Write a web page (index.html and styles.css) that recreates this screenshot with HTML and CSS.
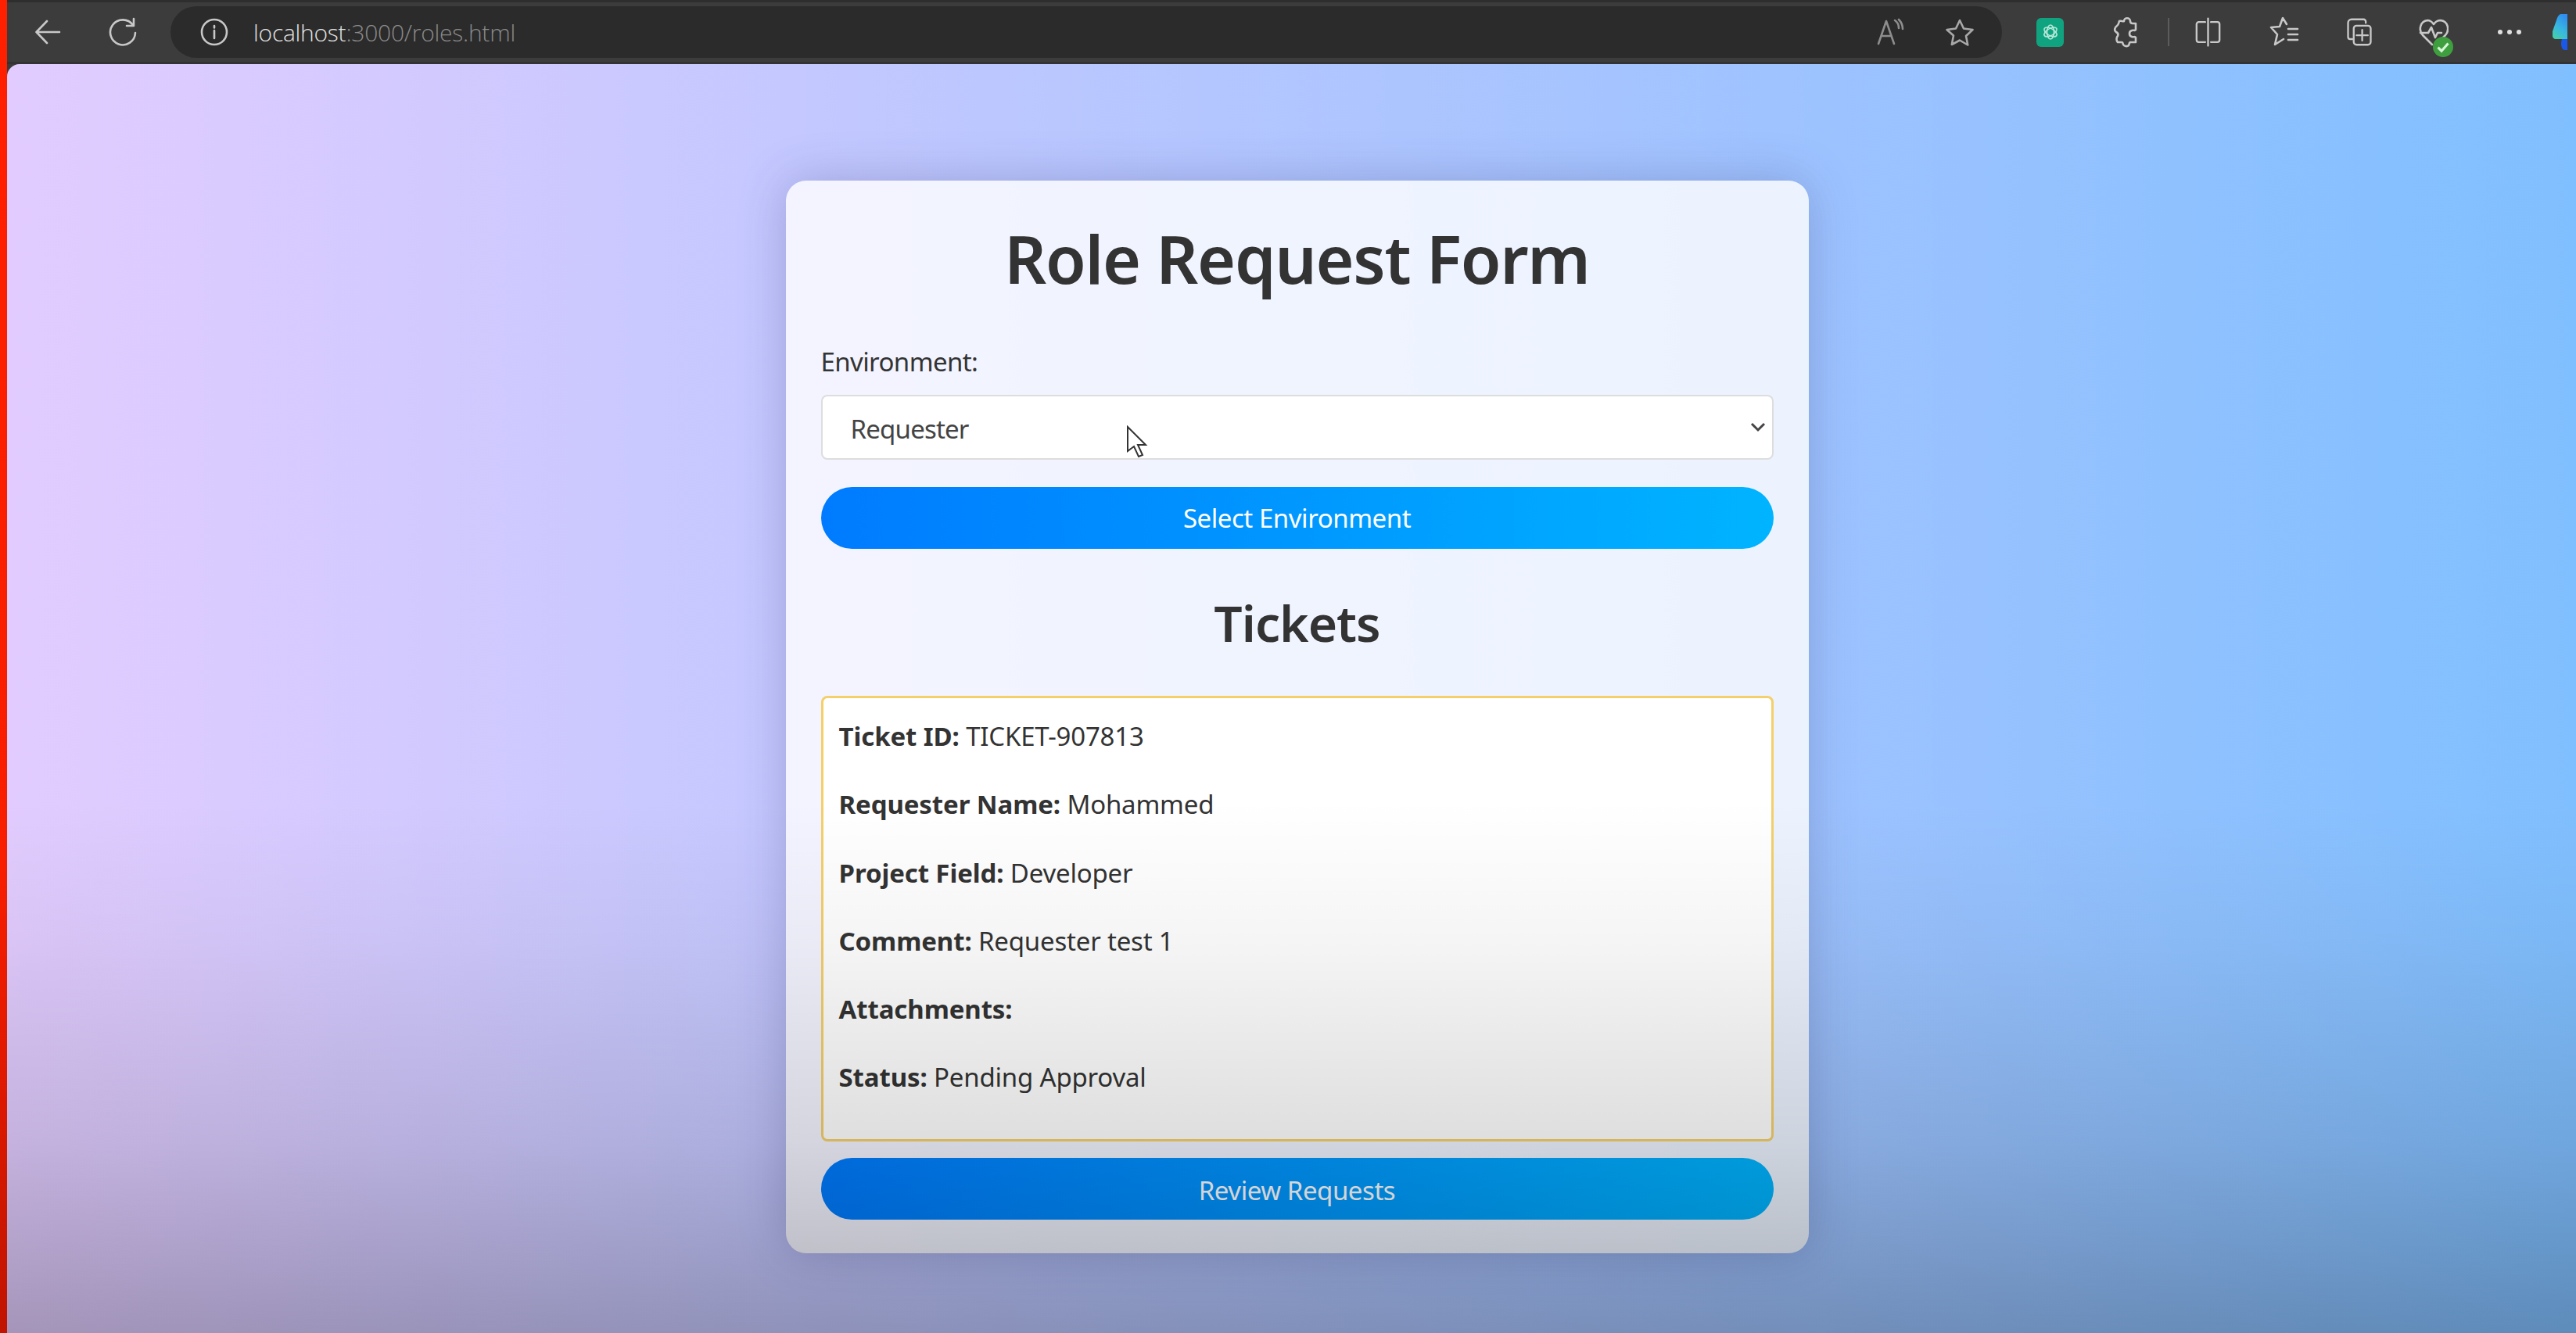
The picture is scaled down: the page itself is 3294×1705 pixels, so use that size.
FILE: index.html
```html
<!DOCTYPE html>
<html lang="en">
<head>
<meta charset="utf-8">
<title>Role Request Form</title>
<link rel="stylesheet" href="styles.css">
</head>
<body>
<div class="strip"></div>
<div class="window">
  <header class="toolbar">
    <svg class="tb-icon back" viewBox="0 0 36 36"><path d="M33 18H4M17 4 3.5 18 17 32"/></svg>
    <svg class="tb-icon reload" viewBox="0 0 38 40"><path d="M32 11A16 16 0 1 0 35 21M33 3v9h-9"/></svg>
    <div class="address">
      <svg class="tb-icon info" viewBox="0 0 36 36"><circle cx="18" cy="18" r="16"/><path d="M18 16v10M18 10v2.5"/></svg>
      <span class="url"><span class="host">localhost</span>:3000/roles.html</span>
      <span class="grow"></span>
      <svg class="tb-icon aloud" viewBox="0 0 36 36"><path d="M3 33 13 4l10 29M6.5 23h13M24 3c3 2 5 6 5 10M29 2c3 3 5 7 5 12"/></svg>
      <svg class="tb-icon star" viewBox="0 0 38 36"><path d="M19 3l5 10.5 11.5 1.5-8.5 8 2.2 11.5L19 28.500 8.800 34 11 22.500 2.500 15 14 13.500z"/></svg>
    </div>
    <div class="ext-gpt"><svg viewBox="0 0 24 24"><ellipse cx="12" cy="12" rx="4.5" ry="9"/><ellipse cx="12" cy="12" rx="4.5" ry="9" transform="rotate(60 12 12)"/><ellipse cx="12" cy="12" rx="4.5" ry="9" transform="rotate(120 12 12)"/></svg></div>
    <svg class="tb-icon puzzle" viewBox="0 0 36 40"><path d="M14 6c0-5 8-5 8 0 0 2 1 3 3 3h4v8c-1 2-3 0-5 1-4 1-4 7 0 8 2 1 4-1 5 1v6h-7c-2 1-1 3-2 4-2 2-6 1-7-1-1-2 0-3-2-3H6c-2-2-2-6 0-8 1-2 0-4-2-5-3-2-2-6 1-8 2-1 2-3 3-6 2-1 5 1 6 0z"/></svg>
    <span class="sep"></span>
    <svg class="tb-icon split" viewBox="0 0 36 40"><path d="M18 1v38M14 6H5a3 3 0 0 0-3 3v22a3 3 0 0 0 3 3h9M22 6h9a3 3 0 0 1 3 3v22a3 3 0 0 1-3 3h-9"/></svg>
    <svg class="tb-icon fav" viewBox="0 0 38 40"><path d="M22 10 17 2l-4 11-11 1 8 9-3 13 11-7M24 16h12M24 23h12M24 30h12"/></svg>
    <svg class="tb-icon coll" viewBox="0 0 38 42"><path d="M28 8V6a3 3 0 0 0-3-3H8a5 5 0 0 0-5 5v20a3 3 0 0 0 3 3h3"/><rect x="11" y="12" width="24" height="27" rx="4"/><path d="M23 18v15M15 25.5h16"/></svg>
    <div class="heart">
      <svg class="tb-icon" viewBox="0 0 38 36"><path d="M17 34 5 22C-1 15 2 4 11 3c4 0 6 2 8 5 2-3 5-5 9-5 9 1 12 12 6 19l-3 3M2 19h10l4-7 5 13 3-6h5"/></svg>
      <span class="check"><svg viewBox="0 0 20 20"><path d="M5 10.5l3.5 3.5L15 6.5"/></svg></span>
    </div>
    <div class="dots"><i></i><i></i><i></i></div>
    <svg class="copilot" viewBox="0 0 19 46">
      <defs>
        <linearGradient id="cop" x1="0.7" y1="0" x2="0.2" y2="1">
          <stop offset="0" stop-color="#2f8df0"/>
          <stop offset="0.55" stop-color="#38b8e0"/>
          <stop offset="1" stop-color="#44d0a8"/>
        </linearGradient>
      </defs>
      <path d="M11 0h8v32H4C0 32-1 27 0 22L6 5C7 2 9 0 11 0z" fill="url(#cop)"/>
      <path d="M12 32h7v14h-3C11 46 10 38 12 32z" fill="#1c58e8"/>
    </svg>
  </header>
  <main class="page">
    <section class="card">
      <h1 class="title">Role Request Form</h1>
      <label class="label" for="env">Environment:</label>
      <div class="select-wrap">
        <select class="select" id="env"><option>Requester</option></select>
        <svg class="chevron" viewBox="0 0 20 14"><path d="M2 3l8 8 8-8"/></svg>
        <svg class="cursor" viewBox="0 0 28 42"><path d="M2 2v31l8-6 6 13 5-2-6-13h10z"/></svg>
      </div>
      <button class="btn btn-select" type="button">Select Environment</button>
      <h2 class="subtitle">Tickets</h2>
      <article class="ticket">
        <p class="row"><b>Ticket ID:</b> TICKET-907813</p>
        <p class="row"><b>Requester Name:</b> Mohammed</p>
        <p class="row"><b>Project Field:</b> Developer</p>
        <p class="row"><b>Comment:</b> Requester test 1</p>
        <p class="row"><b>Attachments:</b></p>
        <p class="row"><b>Status:</b> Pending Approval</p>
      </article>
      <button class="btn btn-review" type="button">Review Requests</button>
    </section>
    <div class="fade"></div>
  </main>
</div>
</body>
</html>
```
FILE: styles.css
```css
* { box-sizing: border-box; }
html, body { margin: 0; height: 100%; overflow: hidden; }
body { display: flex; background: #3b3b3b; font-family: "Noto Sans", "Open Sans", sans-serif; color: #333; }
.strip { width: 9px; flex: none; background: linear-gradient(180deg, #ff2000 0%, #f81e00 65%, #c01400 100%); }
.window { flex: 1; display: flex; flex-direction: column; min-width: 0; }
.toolbar { height: 82px; flex: none; display: flex; align-items: center; background: #3c3c3c; border-top: 3px solid #2e2e2e; border-bottom: 3px solid #333; padding-left: 34px; }
.tb-icon { fill: none; stroke: #c8c8c8; stroke-width: 2.6; stroke-linecap: round; stroke-linejoin: round; flex: none; filter: blur(.5px); }
.back { width: 36px; height: 36px; }
.reload { width: 38px; height: 40px; margin-left: 59px; }
.address { width: 2342px; height: 66px; margin-left: 42px; background: #2b2b2b; border-radius: 33px; display: flex; align-items: center; padding-left: 38px; }
.info { width: 36px; height: 36px; }
.url { margin-left: 32px; font: 300 30px "Open Sans", sans-serif; letter-spacing: -.25px; color: #8a8a8a; }
.host { color: #e2e2e2; }
.grow { flex: 1; }
.aloud { width: 36px; height: 36px; stroke: #8d8d8d; }
.star { width: 38px; height: 36px; margin: 0 35px 0 52px; stroke: #a8a8a8; }
.ext-gpt { width: 35px; height: 37px; margin-left: 44px; border-radius: 6px; background: #10a37f; display: flex; align-items: center; justify-content: center; }
.ext-gpt svg { width: 24px; height: 24px; fill: none; stroke: #b8e8da; stroke-width: 1.6; filter: blur(.5px); }
.puzzle { width: 36px; height: 40px; margin-left: 63px; }
.sep { width: 2px; height: 36px; background: #5c5c5c; margin-left: 34px; }
.split { width: 33px; height: 38px; margin-left: 33px; }
.fav { width: 38px; height: 40px; margin-left: 62px; }
.coll { width: 36px; height: 38px; margin-left: 59px; }
.heart { position: relative; width: 38px; height: 36px; margin-left: 58px; }
.heart .tb-icon { width: 38px; height: 36px; display: block; }
.check { position: absolute; right: -6px; bottom: -14px; width: 26px; height: 26px; border-radius: 50%; background: #3f9f3f; display: flex; }
.check svg { fill: none; stroke: #d8f5d8; stroke-width: 2.4; }
.dots { display: flex; gap: 6px; margin-left: 63px; }
.dots i { width: 6px; height: 6px; border-radius: 50%; background: #e0e0e0; }
.copilot { width: 19px; height: 46px; margin-left: 40px; flex: none; }
.page { flex: 1; position: relative; display: flex; justify-content: center; align-items: flex-start; padding: 149px 0 0 14px; border-radius: 16px 0 0 0; background: linear-gradient(90deg, #e2ccff 0%, #80bfff 100%); overflow: hidden; }
.fade { position: absolute; inset: 0; pointer-events: none; background: linear-gradient(180deg, rgba(0,0,0,0) 0%, rgba(0,0,0,0) 58%, rgba(0,0,0,.04) 69%, rgba(0,0,0,.13) 85%, rgba(0,0,0,.27) 100%); }
.card { width: 1308px; height: 1372px; padding: 45px 45px 0; border-radius: 26px; background: rgba(255,255,255,.8); box-shadow: 0 0 60px rgba(60,60,120,.28); flex: none; display: flex; flex-direction: column; }
.title { margin: -2px 0 0; text-align: center; font-size: 84px; line-height: 114px; font-weight: 600; color: #333; letter-spacing: -1.3px; }
.label { margin-top: 52px; font-size: 33px; line-height: 46px; letter-spacing: -.6px; color: #333; }
.select-wrap { position: relative; margin-top: 19px; }
.select { appearance: none; width: 100%; height: 83px; padding: 3px 36px 0; border: 2px solid #ddd; border-radius: 8px; background: #fff; font: 33px "Noto Sans", sans-serif; letter-spacing: -.8px; color: #444; display: block; }
.chevron { position: absolute; right: 10px; top: 34px; width: 20px; height: 14px; fill: none; stroke: #444; stroke-width: 3; }
.cursor { position: absolute; left: 390px; top: 39px; width: 28px; height: 42px; fill: #fff; stroke: #333; stroke-width: 2; }
.btn { display: block; width: 100%; height: 79px; border: 0; border-radius: 40px; color: #fff; font: 33px "Noto Sans", sans-serif; letter-spacing: -.45px; background: linear-gradient(90deg, #007bff, #00b4ff); flex: none; }
.btn-select { margin-top: 35px; }
.subtitle { margin: 49px 0 0; text-align: center; font-size: 64px; line-height: 92px; font-weight: 600; color: #333; letter-spacing: -1px; }
.ticket { margin-top: 47px; height: 570px; padding: 0 20px; border: 3px solid #f4cf6a; border-radius: 8px; background: #fff; }
.row { margin: 0; height: 87.3px; padding-top: 26px; font-size: 33px; line-height: 46px; letter-spacing: -.2px; color: #333; }
.row b { font-weight: 700; letter-spacing: -.1px; }
.btn-review { margin-top: 21px; padding-top: 5px; }
```
